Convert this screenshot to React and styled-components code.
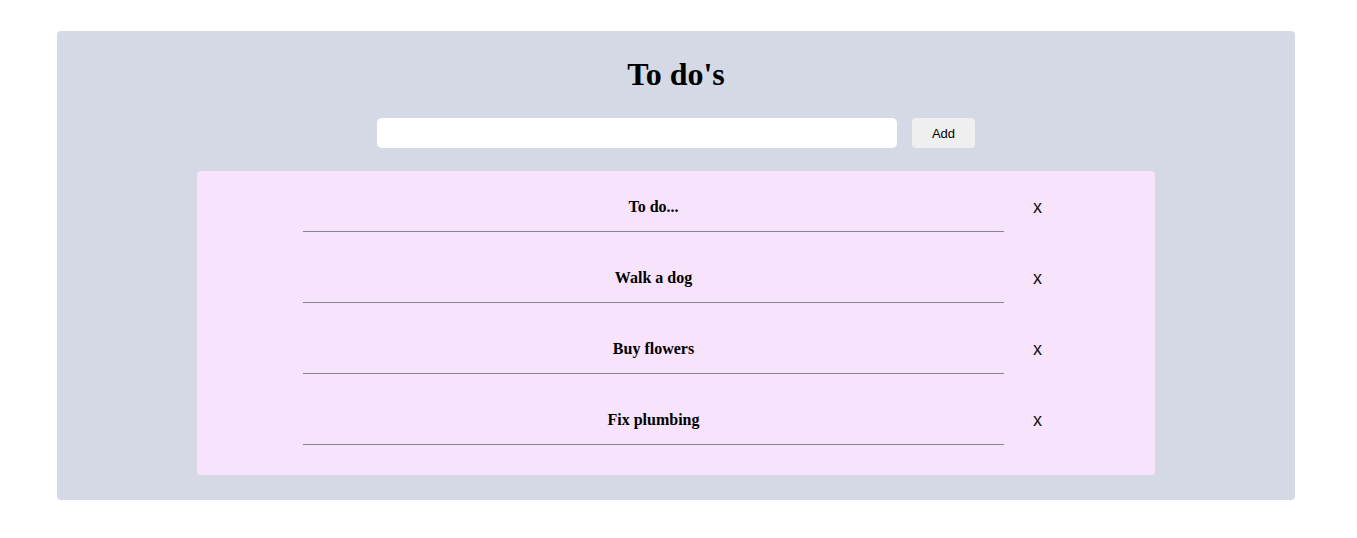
import React, { useState } from "react";
import styled, { createGlobalStyle } from "styled-components";

const GlobalStyle = createGlobalStyle`
  html, body { margin: 0; padding: 0; background: #ffffff; }
  body { font-family: "Liberation Serif", "Times New Roman", serif; }
`;

const Page = styled.div`
  padding: 31px 62px 39px 57px;
`;

const Card = styled.main`
  background: #d5d9e5;
  border-radius: 4px;
  padding: 25px 0 25px;
  display: flex;
  flex-direction: column;
  align-items: center;
`;

const Title = styled.h1`
  margin: 0;
  font-family: "Liberation Serif", "Times New Roman", serif;
  font-size: 32px;
  line-height: 37px;
  font-weight: 700;
  color: #000;
`;

const Form = styled.form`
  margin-top: 25px;
  display: flex;
  gap: 15px;
  height: 30px;
`;

const Input = styled.input`
  width: 520px;
  height: 30px;
  box-sizing: border-box;
  border: none;
  border-radius: 5px;
  background: #ffffff;
  padding: 0 8px;
  outline: none;
  font-family: "Liberation Sans", Arial, sans-serif;
  font-size: 13px;
`;

const AddButton = styled.button`
  width: 63px;
  height: 30px;
  border: none;
  border-radius: 4px;
  background: #efefef;
  color: #000;
  font-family: "Liberation Sans", Arial, sans-serif;
  font-size: 13px;
  padding: 0;
  cursor: pointer;
`;

const List = styled.ul`
  margin: 23px 0 0;
  width: 958px;
  box-sizing: border-box;
  background: #f7e3fc;
  border-radius: 4px;
  list-style: none;
  padding: 11px 0 30px;
  display: flex;
  flex-direction: column;
  align-items: center;
  gap: 21px;
`;

const Row = styled.li`
  display: flex;
  align-items: center;
`;

const TodoText = styled.h4`
  margin: 0;
  width: 701px;
  padding: 16px 0 15px;
  border-bottom: 1px solid #8c8391;
  text-align: center;
  font-family: "Liberation Serif", "Times New Roman", serif;
  font-size: 16px;
  line-height: 18px;
  font-weight: 700;
  color: #000;
`;

const Remove = styled.button`
  width: 45px;
  box-sizing: border-box;
  padding: 0 0 0 29px;
  border: none;
  background: transparent;
  text-align: left;
  font-family: "Liberation Sans", Arial, sans-serif;
  font-size: 18px;
  line-height: 21px;
  color: #111;
  cursor: pointer;
`;

export default function App() {
  const [items, setItems] = useState(["To do...", "Walk a dog", "Buy flowers", "Fix plumbing"]);
  const [value, setValue] = useState("");

  const add = (e) => {
    e.preventDefault();
    if (!value.trim()) return;
    setItems([...items, value.trim()]);
    setValue("");
  };

  return (
    <>
      <GlobalStyle />
      <Page>
        <Card>
          <Title>To do's</Title>
          <Form onSubmit={add}>
            <Input value={value} onChange={(e) => setValue(e.target.value)} />
            <AddButton type="submit">Add</AddButton>
          </Form>
          <List>
            {items.map((item, i) => (
              <Row key={i}>
                <TodoText>{item}</TodoText>
                <Remove type="button" onClick={() => setItems(items.filter((_, j) => j !== i))}>
                  x
                </Remove>
              </Row>
            ))}
          </List>
        </Card>
      </Page>
    </>
  );
}
